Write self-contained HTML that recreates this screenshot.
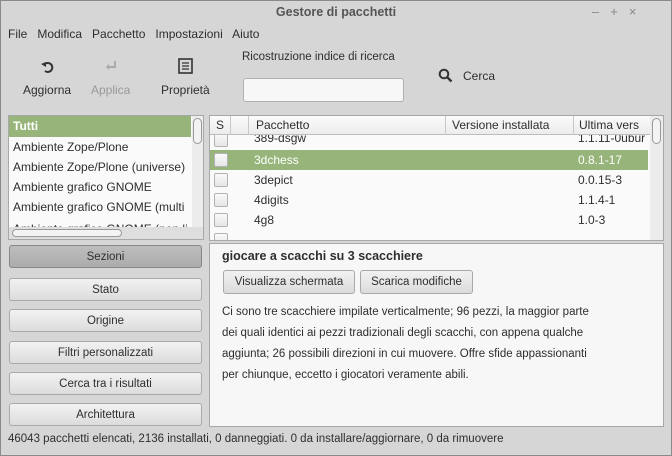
<!DOCTYPE html>
<html><head><meta charset="utf-8"><style>
*{box-sizing:border-box;margin:0;padding:0}
body{width:672px;height:456px;overflow:hidden;background:#d6d6d6;font-family:"Liberation Sans",sans-serif;font-size:12px;color:#2e2e2e;position:relative}
.a{position:absolute}
.win{left:0;top:0;width:672px;height:456px;border:1px solid #8a8a8a;background:#d6d6d6}
.btn{position:absolute;left:9px;width:193px;height:23px;border:1px solid #a9a9a9;border-radius:3px;background:linear-gradient(#f2f2f2,#dcdcdc);text-align:center;line-height:23px;font-size:11.5px}
.row{position:absolute;left:0;width:438px;height:20px;line-height:20px;font-size:12px}
.cb{position:absolute;left:4px;top:3px;width:14px;height:14px;border:1px solid #b3b3b3;border-radius:2px;background:linear-gradient(#fafafa,#e6e6e6)}
.li{height:20px;line-height:20px;padding-left:4px;font-size:12px;white-space:nowrap}
</style></head><body>
<div class="a win"></div>
<div class="a" style="left:0;top:0;width:672px;height:25px;text-align:center;line-height:25px;font-weight:bold;color:#555;font-size:12.5px">Gestore di pacchetti</div>
<div class="a" style="left:592px;top:4px;color:#888;font-size:13px;letter-spacing:11px">–+×</div>
<div class="a" style="left:8px;top:27px;font-size:12px;word-spacing:0">File&nbsp;&nbsp; Modifica&nbsp;&nbsp; Pacchetto&nbsp;&nbsp; Impostazioni&nbsp;&nbsp; Aiuto</div>
<svg class="a" style="left:40px;top:59px" width="16" height="16" viewBox="0 0 16 16"><path d="M4 6 A4.5 4.5 0 1 1 5 12" fill="none" stroke="#333" stroke-width="2"/><path d="M1 5 L6 3 L6 8Z" fill="#333"/></svg>
<svg class="a" style="left:104px;top:59px" width="14" height="14" viewBox="0 0 14 14"><path d="M11 2 V8 H4" fill="none" stroke="#aaa" stroke-width="2"/><path d="M2 8 L5 5 L5 11Z" fill="#aaa"/></svg>
<svg class="a" style="left:178px;top:58px" width="15" height="16" viewBox="0 0 15 16"><rect x="1" y="1" width="13" height="14" fill="none" stroke="#333" stroke-width="1.6"/><path d="M4 5h7M4 8h7M4 11h7" stroke="#333" stroke-width="1.3"/></svg>
<div class="a" style="left:23px;top:83px">Aggiorna</div>
<div class="a" style="left:91px;top:83px;color:#999">Applica</div>
<div class="a" style="left:161px;top:83px">Proprietà</div>
<div class="a" style="left:242px;top:51px;font-size:11.5px">Ricostruzione indice di ricerca</div>
<div class="a" style="left:243px;top:78px;width:161px;height:24px;border:1px solid #b0b0b0;border-radius:3px;background:#f7f7f7"></div>
<svg class="a" style="left:438px;top:68px" width="15" height="15" viewBox="0 0 15 15"><circle cx="6" cy="6" r="4.3" fill="none" stroke="#333" stroke-width="2"/><path d="M9 9 L13.5 13.5" stroke="#333" stroke-width="2.4"/></svg>
<div class="a" style="left:463px;top:69px">Cerca</div>

<div class="a" style="left:8px;top:115px;width:196px;height:125px;border:1px solid #a8a8a8;background:#fafafa;overflow:hidden">
<div class="li" style="background:#97b57a;color:#fff;font-weight:bold;height:21px;line-height:21px;width:182px">Tutti</div>
<div class="li">Ambiente Zope/Plone</div>
<div class="li">Ambiente Zope/Plone (universe)</div>
<div class="li">Ambiente grafico GNOME</div>
<div class="li">Ambiente grafico GNOME (multi</div>
<div class="li" style="margin-top:2px">Ambiente grafico GNOME (non li</div>
<div class="a" style="left:0;top:111px;width:194px;height:12px;background:#dedede"></div>
<div class="a" style="left:3px;top:113px;width:110px;height:8px;border:1px solid #999;border-radius:5px;background:#f3f3f3"></div>
<div class="a" style="left:183px;top:0;width:11px;height:111px;background:#ececec"></div>
<div class="a" style="left:184px;top:2px;width:9px;height:26px;border:1px solid #999;border-radius:5px;background:#f3f3f3"></div>
</div>

<div class="a" style="left:209px;top:115px;width:455px;height:126px;border:1px solid #a8a8a8;background:#fafafa;overflow:hidden">
<div class="row" style="top:14px"><div class="cb"></div><span class="a" style="left:44px;top:-2px">389-dsgw</span><span class="a" style="left:368px;top:-2px">1.1.11-0ubur</span></div>
<div class="row" style="top:34px;background:#97b57a;color:#fff"><div class="cb"></div><span class="a" style="left:44px">3dchess</span><span class="a" style="left:368px">0.8.1-17</span></div>
<div class="row" style="top:54px"><div class="cb"></div><span class="a" style="left:44px">3depict</span><span class="a" style="left:368px">0.0.15-3</span></div>
<div class="row" style="top:74px"><div class="cb"></div><span class="a" style="left:44px">4digits</span><span class="a" style="left:368px">1.1.4-1</span></div>
<div class="row" style="top:94px"><div class="cb"></div><span class="a" style="left:44px">4g8</span><span class="a" style="left:368px">1.0-3</span></div>
<div class="row" style="top:114px"><div class="cb"></div></div>
<div class="a" style="left:0;top:0;width:440px;height:19px;background:linear-gradient(#fbfbfb,#ececec);border-bottom:1px solid #bdbdbd;line-height:19px">
<span class="a" style="left:6px">S</span><span class="a" style="left:20px;top:0;height:19px;border-left:1px solid #c8c8c8"></span><span class="a" style="left:38px;top:0;height:19px;border-left:1px solid #c8c8c8"></span>
<span class="a" style="left:46px">Pacchetto</span><span class="a" style="left:235px;top:0;height:19px;border-left:1px solid #c8c8c8"></span>
<span class="a" style="left:242px">Versione installata</span><span class="a" style="left:363px;top:0;height:19px;border-left:1px solid #c8c8c8"></span>
<span class="a" style="left:369px">Ultima vers</span></div>
<div class="a" style="left:440px;top:0;width:13px;height:126px;background:#ececec"></div>
<div class="a" style="left:442px;top:2px;width:9px;height:26px;border:1px solid #999;border-radius:5px;background:#f3f3f3"></div>
</div>

<div class="a" style="left:209px;top:243px;width:455px;height:184px;border:1px solid #a8a8a8;background:#f7f7f7"></div>
<div class="a" style="left:222px;top:249px;font-weight:bold;font-size:12.5px">giocare a scacchi su 3 scacchiere</div>
<div class="a" style="left:223px;top:270px;width:132px;height:24px;border:1px solid #a9a9a9;border-radius:3px;background:linear-gradient(#f2f2f2,#dcdcdc);text-align:center;line-height:22px;font-size:11.5px">Visualizza schermata</div>
<div class="a" style="left:360px;top:270px;width:113px;height:24px;border:1px solid #a9a9a9;border-radius:3px;background:linear-gradient(#f2f2f2,#dcdcdc);text-align:center;line-height:22px;font-size:11.5px">Scarica modifiche</div>
<div class="a" style="left:222px;top:302px;white-space:nowrap;font-size:11.5px;line-height:21px">Ci sono tre scacchiere impilate verticalmente; 96 pezzi, la maggior parte<br>dei quali identici ai pezzi tradizionali degli scacchi, con appena qualche<br>aggiunta; 26 possibili direzioni in cui muovere. Offre sfide appassionanti<br>per chiunque, eccetto i giocatori veramente abili.</div>

<div class="btn" style="top:245px;background:linear-gradient(#bdbdbd,#acacac);border-color:#888">Sezioni</div>
<div class="btn" style="top:278px">Stato</div>
<div class="btn" style="top:309px">Origine</div>
<div class="btn" style="top:341px">Filtri personalizzati</div>
<div class="btn" style="top:372px">Cerca tra i risultati</div>
<div class="btn" style="top:403px">Architettura</div>
<div class="a" style="left:8px;top:433px;font-size:11.5px">46043 pacchetti elencati, 2136 installati, 0 danneggiati. 0 da installare/aggiornare, 0 da rimuovere</div>
</body></html>
